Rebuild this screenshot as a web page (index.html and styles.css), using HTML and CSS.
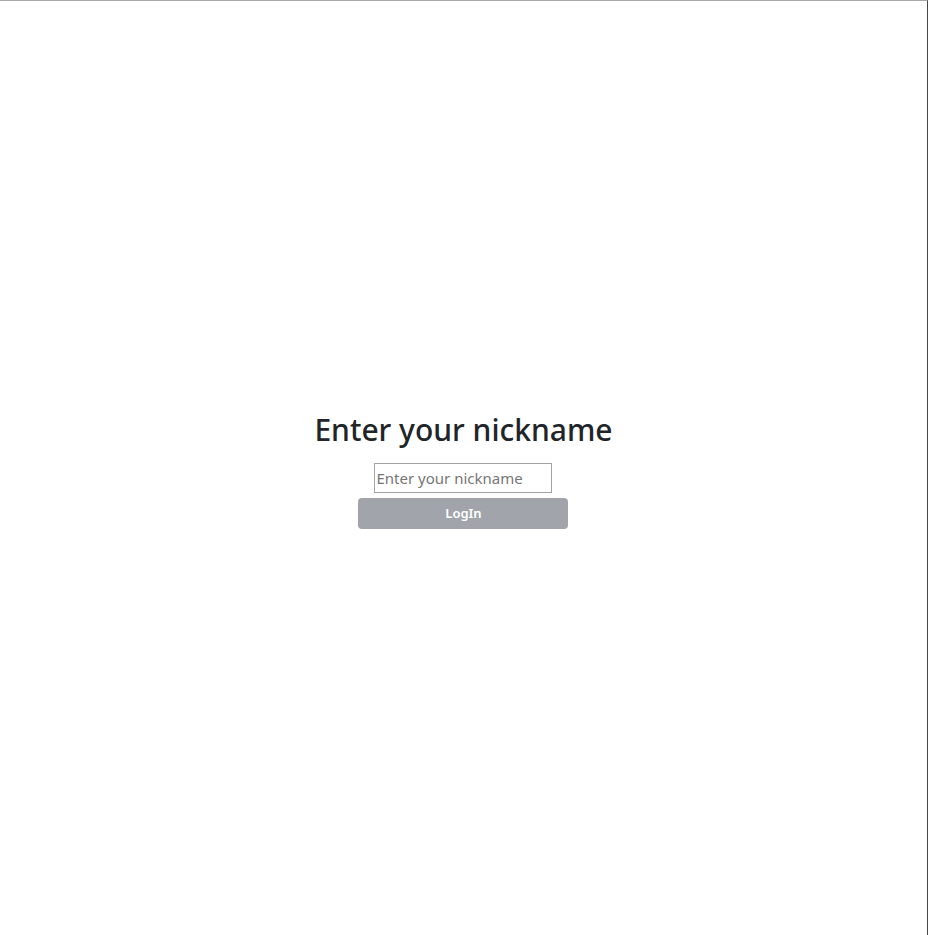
FILE: index.html
```html
<!DOCTYPE html>
<html>
<head>
<meta charset="utf-8">
<link rel="stylesheet" href="styles.css">
</head>
<body>
<div class="frame">
  <main class="login">
    <h2 class="title">Enter your nickname</h2>
    <input class="nick" type="text" placeholder="Enter your nickname">
    <button class="btn" type="button">LogIn</button>
  </main>
</div>
</body>
</html>
```
FILE: styles.css
```css
html, body {
  margin: 0;
  padding: 0;
  background: #fff;
}
.frame {
  box-sizing: border-box;
  height: 935px;
  width: 928px;
  border-top: 1px solid #a8a8a8;
  border-right: 1px solid #474747;
  display: flex;
  align-items: center;
  justify-content: center;
  font-family: "Noto Sans", "Open Sans", sans-serif;
}
.login {
  display: flex;
  flex-direction: column;
  align-items: center;
  margin-top: 3px;
}
.title {
  margin: 0 0 14px;
  font-size: 30px;
  font-weight: 500;
  line-height: 38px;
  color: #212529;
}
.nick {
  box-sizing: border-box;
  width: 178px;
  height: 30px;
  margin: 0;
  padding: 0 1px;
  border: 1px solid #a3a3a3;
  border-radius: 0;
  font-family: inherit;
  font-size: 15px;
  color: #212529;
  outline: none;
}
.nick::placeholder {
  color: #767676;
}
.btn {
  box-sizing: border-box;
  width: 210px;
  height: 31px;
  margin-top: 5px;
  padding: 0;
  border: none;
  border-radius: 4px;
  background: #a1a5ab;
  color: #fff;
  font-family: inherit;
  font-size: 13px;
  font-weight: 600;
}
```
